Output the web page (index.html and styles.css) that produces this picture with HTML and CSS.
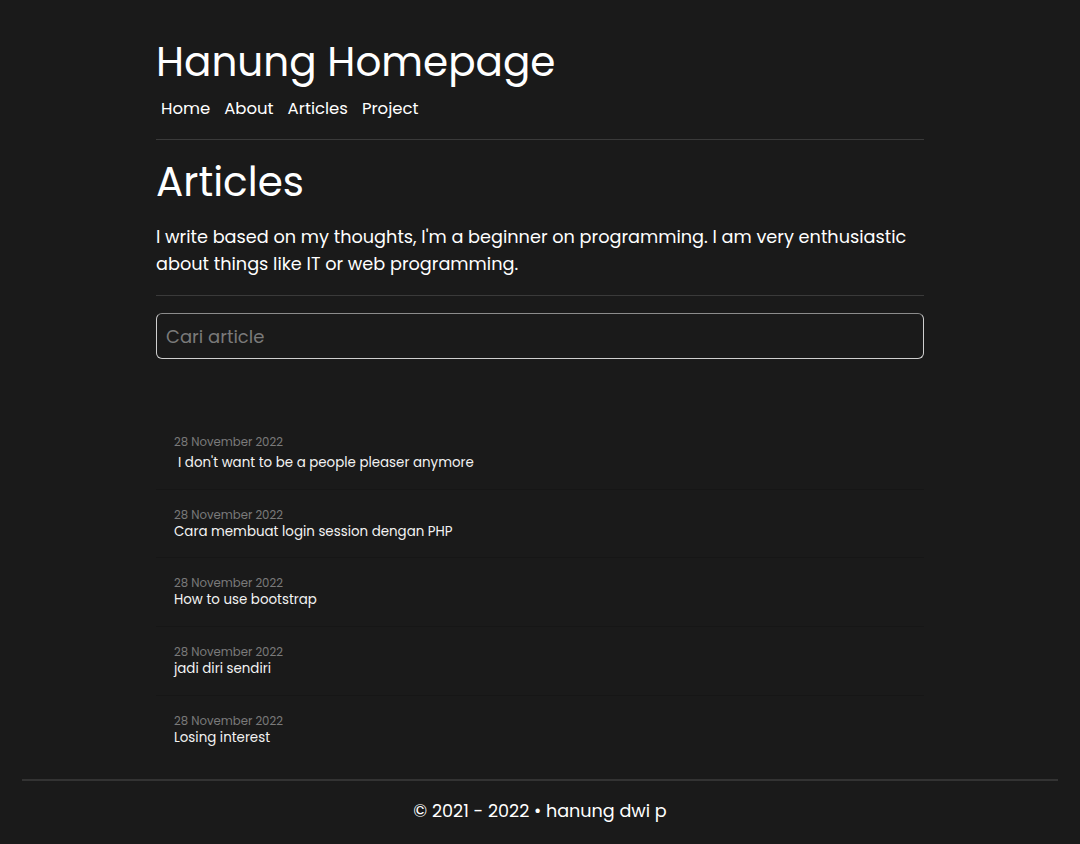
FILE: index.html
```html
<!DOCTYPE html>
<html lang="en">
<head>
<meta charset="utf-8">
<title>Articles - Hanung Homepage</title>
<link rel="stylesheet" href="styles.css">
</head>
<body>
<div class="container">
  <header class="site-header">
    <h1 class="site-title">Hanung Homepage</h1>
    <nav class="nav">
      <a href="#">Home</a>
      <a href="#">About</a>
      <a href="#">Articles</a>
      <a href="#">Project</a>
    </nav>
  </header>
  <main>
    <h2 class="page-title">Articles</h2>
    <p class="lead">I write based on my thoughts, I'm a beginner on programming. I am very enthusiastic about things like IT or web programming.</p>
    <hr class="rule">
    <input class="search" type="text" placeholder="Cari article">
    <ul class="articles">
      <li class="article first"><span class="date">28 November 2022</span><a class="title indent" href="#">I don't want to be a people pleaser anymore</a></li>
      <li class="article"><span class="date">28 November 2022</span><a class="title" href="#">Cara membuat login session dengan PHP</a></li>
      <li class="article"><span class="date">28 November 2022</span><a class="title" href="#">How to use bootstrap</a></li>
      <li class="article"><span class="date">28 November 2022</span><a class="title" href="#">jadi diri sendiri</a></li>
      <li class="article"><span class="date">28 November 2022</span><a class="title" href="#">Losing interest</a></li>
    </ul>
  </main>
</div>
<footer class="footer">
  <p>© 2021 - 2022 • hanung dwi p</p>
</footer>
</body>
</html>
```
FILE: styles.css
```css
html, body {
  margin: 0;
  padding: 0;
}
body {
  background: #1a1a1a;
  color: #ffffff;
  font-family: "Poppins", "Inter", "DejaVu Sans", sans-serif;
}
a {
  color: inherit;
  text-decoration: none;
}
.container {
  width: 768px;
  margin: 0 auto;
}
.site-header {
  padding-top: 34px;
  border-bottom: 1px solid #3a3a3a;
  padding-bottom: 17px;
}
.site-title {
  margin: 0;
  font-size: 40.5px;
  font-weight: 400;
  line-height: 56px;
}
.nav {
  display: flex;
  gap: 14px;
  padding-left: 5px;
  margin-top: 6px;
  font-size: 16.5px;
  line-height: 26px;
}
.page-title {
  margin: 15px 0 0;
  font-size: 40.5px;
  font-weight: 400;
  line-height: 54px;
}
.lead {
  margin: 14px 0 0;
  font-size: 17.7px;
  line-height: 27px;
}
.rule {
  border: 0;
  border-top: 1px solid #3a3a3a;
  margin: 18px 0 0;
}
.search {
  display: block;
  box-sizing: border-box;
  width: 100%;
  height: 46px;
  margin-top: 17px;
  padding: 0 9px;
  background: #1a1a1a;
  border: 1px solid #cfcfcf;
  border-top-color: #8c8c8c;
  border-radius: 6px;
  color: #fff;
  font-family: inherit;
  font-size: 18px;
}
.search::placeholder {
  color: #7a7a7a;
}
.articles {
  list-style: none;
  margin: 58px 0 0;
  padding: 0;
}
.article {
  display: flex;
  flex-direction: column;
  padding: 18px 18px 17.7px;
  border-bottom: 1px solid #161616;
}
.article:last-child {
  border-bottom: 0;
}
.date {
  font-size: 11.7px;
  line-height: 15px;
  color: #7a7a7a;
}
.title {
  font-size: 13.4px;
  line-height: 17px;
  color: #f2f2f2;
}
.first .title {
  margin-top: 4px;
}
.indent {
  padding-left: 4px;
}
.footer {
  margin: 16px 22px 0;
  border-top: 2px solid #333333;
  text-align: center;
}
.footer p {
  margin: 0;
  padding: 17px 0 18px;
  font-size: 17.6px;
  line-height: 26px;
}
```
